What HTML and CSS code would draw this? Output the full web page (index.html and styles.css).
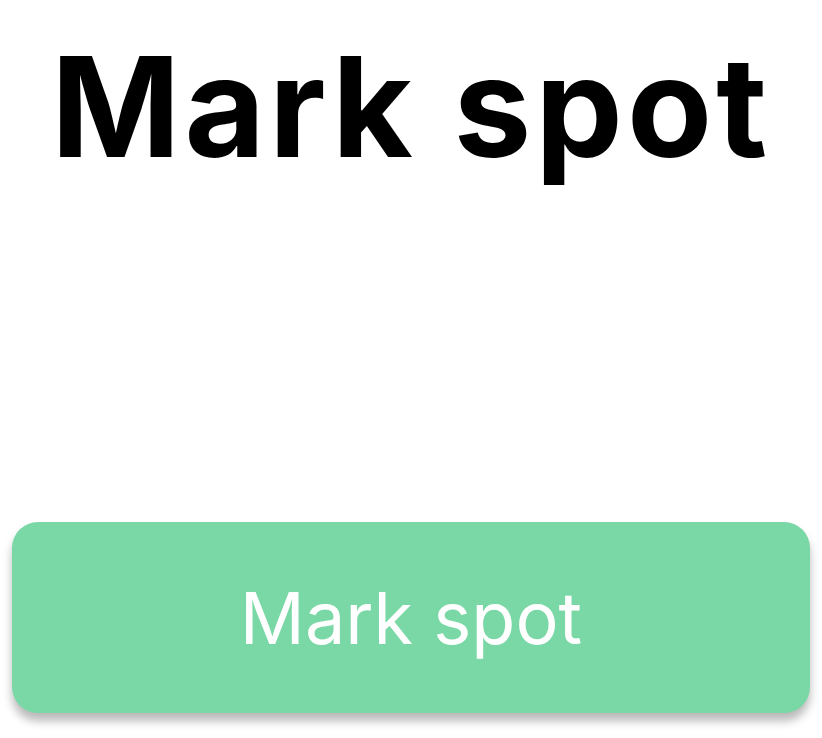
FILE: index.html
```html
<!DOCTYPE html>
<html>
<head>
<meta charset="utf-8">
<link rel="stylesheet" href="styles.css">
</head>
<body>
<div class="screen">
  <h1 class="title">Mark spot</h1>
  <button class="action">Mark spot</button>
</div>
</body>
</html>
```
FILE: styles.css
```css
html, body {
  margin: 0;
  padding: 0;
  background: #ffffff;
}
.screen {
  width: 822px;
  height: 738px;
  box-sizing: border-box;
  padding: 0 12px 25px;
  display: flex;
  flex-direction: column;
}
.title {
  margin: 0;
  padding-top: 37px;
  font-family: Inter, "Noto Sans", sans-serif;
  font-weight: 700;
  font-size: 139px;
  line-height: 140px;
  letter-spacing: 4px;
  text-align: center;
  color: #000;
}
.action {
  margin-top: auto;
  height: 191px;
  width: 100%;
  border: none;
  border-radius: 26px;
  background: #79d8a5;
  box-shadow: 0 8px 10px rgba(0, 0, 0, 0.28);
  color: #ffffff;
  font-family: Inter, "Noto Sans", sans-serif;
  font-weight: 400;
  font-size: 72px;
  padding: 0;
}
```
